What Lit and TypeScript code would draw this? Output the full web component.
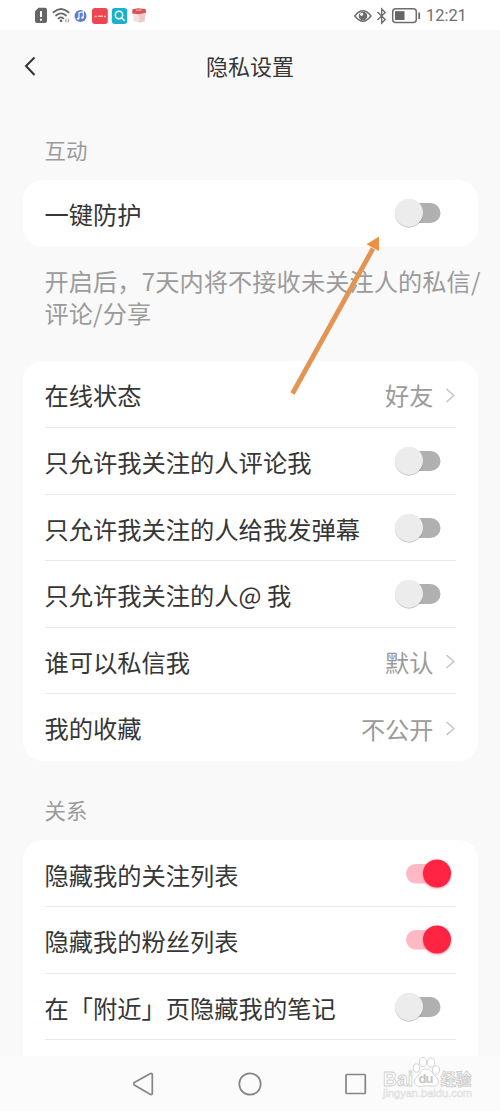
import { LitElement, html, css, svg } from "lit";
import { customElement, property } from "lit/decorators.js";

@customElement("toggle-switch")
class ToggleSwitch extends LitElement {
  @property({ type: Boolean }) on = false;
  static styles = css`
    :host { display: block; width: 60px; height: 34px; }
    svg { display: block; }
    .knob { filter: drop-shadow(0 1px 0.7px rgba(0, 0, 0, 0.22)); }
    .knob-on { filter: drop-shadow(0 1px 1.2px rgba(255, 36, 66, 0.45)); }
  `;
  render() {
    return html`<svg width="60" height="34" viewBox="0 0 60 34">
      ${this.on
        ? svg`<rect x="14" y="7" width="44" height="19.5" rx="9.75" fill="#ffb9c4"/>
            <circle class="knob-on" cx="45" cy="16.5" r="14" fill="#ff2442"/>`
        : svg`<rect x="5" y="7" width="43.5" height="20" rx="10" fill="#b0b0b0"/>
            <circle class="knob" cx="17" cy="16.7" r="14" fill="#ececec"/>`}
    </svg>`;
  }
}

@customElement("setting-row")
class SettingRow extends LitElement {
  @property() label = "";
  @property() value = "";
  @property({ type: Boolean }) on = false;
  @property({ type: Boolean }) last = false;
  static styles = css`
    :host { display: block; padding: 0 22px; }
    .row {
      display: flex; align-items: center; justify-content: space-between;
      height: 66.65px; box-sizing: border-box; white-space: nowrap;
      border-bottom: 1px solid #e9e9e9;
    }
    .last { border-color: transparent; }
    .label { font-size: 24.27px; color: #363636; padding-top: 2px; }
    .side { display: flex; align-items: center; gap: 11px; }
    .value { font-size: 24.2px; color: #9b9b9b; padding-top: 2px; }
    .chevron { margin-top: 3px; }
    .switch { margin-right: 4px; padding-top: 1px; }
  `;
  render() {
    return html`<div class="row ${this.last ? "last" : ""}">
      <span class="label">${this.label}</span>
      ${this.value
        ? html`<span class="side"><span class="value">${this.value}</span>
            <svg class="chevron" width="11" height="18" viewBox="0 0 11 18" fill="none" stroke="#c6c6c6" stroke-width="1.6"><path d="M1.500 2 8.800 8.500 1.500 15"/></svg></span>`
        : html`<toggle-switch class="switch" ?on=${this.on}></toggle-switch>`}
    </div>`;
  }
}

@customElement("app-root")
class AppRoot extends LitElement {
  static styles = css`
    :host {
      display: block; position: relative; width: 500px; height: 1111px; overflow: hidden;
      background: #f9f9f9; font-family: "Noto Sans CJK SC", sans-serif; line-height: 1.3;
    }
    .screen { display: flex; flex-direction: column; height: 1111px; }
    .status {
      flex: none; height: 30px; box-sizing: border-box; background: #fff;
      display: flex; align-items: center; justify-content: space-between; padding: 2px 34px 0;
    }
    .status svg { display: block; }
    .right { display: flex; align-items: center; }
    .clock { font: 16.4px/20px Roboto, sans-serif; color: #6e6e6e; width: 40px; white-space: nowrap; }
    .header { flex: none; height: 74px; display: grid; grid-template-columns: 60px 1fr 60px; align-items: center; }
    .title { text-align: center; font-size: 22px; color: #363636; padding-bottom: 3px; }
    .back { margin-left: 22px; }
    .content { flex: 1; min-height: 0; overflow: hidden; padding: 0 22.5px; }
    .section { box-sizing: border-box; display: flex; align-items: center; padding-left: 22px; font-size: 21.4px; color: #9b9b9b; }
    .first { padding-top: 15px; height: 76.1px; }
    .second { padding-top: 18px; height: 79.4px; }
    .card { background: #fff; border-radius: 20px; }
    .note {
      height: 114.5px; box-sizing: border-box; padding: 18px 0 0 22px;
      font-size: 24.2px; line-height: 32px; color: #9b9b9b; white-space: nowrap;
      letter-spacing: 0.1px;
    }
    .line { display: block; }
    .nav { flex: none; height: 55px; background: #fbfbfb; }
    .nav svg { display: block; }
    .arrow { position: absolute; left: 280px; top: 225px; }
    .mark { font-family: "Liberation Sans", "Noto Sans CJK SC", sans-serif; font-weight: bold; }
    .url { font-family: "Liberation Sans", sans-serif; }
  `;

  private statusIcons() {
    return html`<svg width="116" height="20" viewBox="34 6 116 20">
      <path d="M38.5 7.8H45Q47 7.8 47 9.8V21Q47 23 45 23H37Q35 23 35 21V11.2Z" fill="#656565"/>
      <path d="M41 11v6M41 18.8v2" stroke="#fff" stroke-width="2"/>
      <g fill="none" stroke="#696969" stroke-width="1.8" stroke-linecap="round">
        <path d="M53.5 12.3Q61 5.7 68.5 12.3"/><path d="M56 15.5Q61 11.3 66 15.5"/><path d="M58.4 18.4Q61 16.5 63.4 18.4"/>
      </g>
      <circle cx="61" cy="20.8" r="1.4" fill="#696969"/><path d="M66.4 18v5l-1.5-2.3ZM67.8 18v5l1.6-2.3Z" fill="#999"/>
      <circle cx="80.5" cy="16" r="6" fill="#5d7ed0"/>
      <path d="M79 18.6V12.8l4.3-1v5.7" fill="none" stroke="#fff" stroke-width="1.1"/>
      <circle cx="78.1" cy="18.6" r="1.2" fill="#fff"/><circle cx="82.4" cy="17.6" r="1.2" fill="#fff"/>
      <rect x="92" y="8" width="15.8" height="16" rx="3" fill="#ee4650"/>
      <path d="M94.5 16.4h2.2M98 16.2h5M104 16.4h2" stroke="#ffc0c0" stroke-width="1.5"/>
      <rect x="111.8" y="8" width="15.4" height="16" rx="3" fill="#18b2ce"/>
      <circle cx="119" cy="15" r="3.7" fill="none" stroke="#fff" stroke-width="1.5"/><path d="m121.6 17.8 3 3" stroke="#fff" stroke-width="1.6"/>
      <path d="M133 12h12.7l-1.200 9.500-5.300 1.200-5.500-1.600Z" fill="#f4dfdf"/><path d="M139.3 13v9.500l5.200-1.200 1.200-8.800Z" fill="#edc9cb"/>
      <path d="M132.500 9.300 138 8.200l7.500.8.8 3.600-7 1.600-7.200-.8Z" fill="#d65358"/><path d="m136 10.3 5.5-.3" stroke="#f3b8b8"/>
    </svg>`;
  }

  private systemIcons() {
    return html`<svg width="72" height="20" viewBox="354 6 72 20" fill="none" stroke="#6d6d6d">
      <path d="M354.800 16Q362.800 5.600 371 16Q362.800 26.400 354.800 16Z" stroke-width="1.500"/>
      <circle cx="363" cy="16" r="4.300" fill="#6d6d6d" stroke="none"/><circle cx="361.600" cy="14.300" r="1.500" fill="#fff" stroke="none"/>
      <path d="M377.500 12 385.200 19.400 381.700 23V9L385.200 12.400 377.500 20" stroke-width="1.400"/>
      <rect x="392.700" y="8.800" width="23.600" height="13.600" rx="3" stroke-width="1.500"/>
      <rect x="395" y="11.200" width="9.500" height="8.800" fill="#666" stroke="none"/><path d="M419.200 12.500v6.500" stroke-width="1.800"/>
    </svg>`;
  }

  render() {
    return html`<div class="screen">
      <div class="status">
        ${this.statusIcons()}
        <div class="right">${this.systemIcons()}<span class="clock">12:21</span></div>
      </div>
      <div class="header">
        <svg class="back" width="18" height="24" viewBox="0 0 18 24" fill="none" stroke="#333" stroke-width="2"><path d="M12.500 2.500 4 11 12.500 20"/></svg>
        <span class="title">隐私设置</span>
      </div>
      <div class="content">
        <div class="section first">互动</div>
        <div class="card"><setting-row label="一键防护" last></setting-row></div>
        <div class="note"><span class="line">开启后，7天内将不接收未关注人的私信/</span><span class="line">评论/分享</span></div>
        <div class="card">
          <setting-row label="在线状态" value="好友"></setting-row>
          <setting-row label="只允许我关注的人评论我"></setting-row>
          <setting-row label="只允许我关注的人给我发弹幕"></setting-row>
          <setting-row label="只允许我关注的人@ 我"></setting-row>
          <setting-row label="谁可以私信我" value="默认"></setting-row>
          <setting-row label="我的收藏" value="不公开" last></setting-row>
        </div>
        <div class="section second">关系</div>
        <div class="card">
          <setting-row label="隐藏我的关注列表" on></setting-row>
          <setting-row label="隐藏我的粉丝列表" on></setting-row>
          <setting-row label="在「附近」页隐藏我的笔记"></setting-row>
          <setting-row value=" " last></setting-row>
        </div>
      </div>
      <div class="nav">
        <svg width="500" height="55" viewBox="0 1056 500 55">
          <g fill="none" stroke="#858585" stroke-width="1.700" stroke-linejoin="round">
            <path d="M134.300 1082.500Q133 1083.800 134.300 1085L150.500 1094.500Q152.300 1095 152.300 1093V1075Q152.300 1073 150.500 1073.500Z"/>
            <circle cx="250" cy="1084" r="10.700"/><rect x="346" y="1074.500" width="19.300" height="19" rx="0.800"/>
          </g>
          <g fill="#fff" stroke="#cfcfcf" stroke-width="0.900">
            <ellipse cx="416.500" cy="1068" rx="3.300" ry="4.200"/><ellipse cx="423" cy="1062" rx="3.700" ry="4.700"/>
            <ellipse cx="431" cy="1062.500" rx="3.700" ry="4.700"/><ellipse cx="436" cy="1070" rx="3.500" ry="4.200"/>
            <path d="M426 1069C432 1069 433 1075 437 1078C441 1084 436 1087 431 1086C427 1085.500 424 1086 420 1086.500C413 1086 413 1080 417 1077C420 1074 421 1069 426 1069Z"/>
            <g class="mark">
              <text x="383" y="1085.500" font-size="20" textLength="30" lengthAdjust="spacingAndGlyphs">Bai</text>
              <text x="418.500" y="1083" font-size="13" textLength="15" fill="#c4c4c4" stroke="none">du</text>
              <text x="440.500" y="1084.500" font-size="15.500" textLength="31">经验</text>
            </g>
            <text class="url" x="383" y="1096.500" font-size="10" textLength="89" lengthAdjust="spacingAndGlyphs" stroke="#e0e0e0" stroke-width="0.600">jingyan.baidu.com</text>
          </g>
        </svg>
      </div>
    </div>
    <svg class="arrow" width="110" height="180" viewBox="280 225 110 180">
      <path d="m292.500 393.500 80.500-145" stroke="#e39452" stroke-width="4.800"/>
      <path d="M379 236.500 366.500 244.300 379 251Z" fill="#ec9144"/>
    </svg>`;
  }
}
